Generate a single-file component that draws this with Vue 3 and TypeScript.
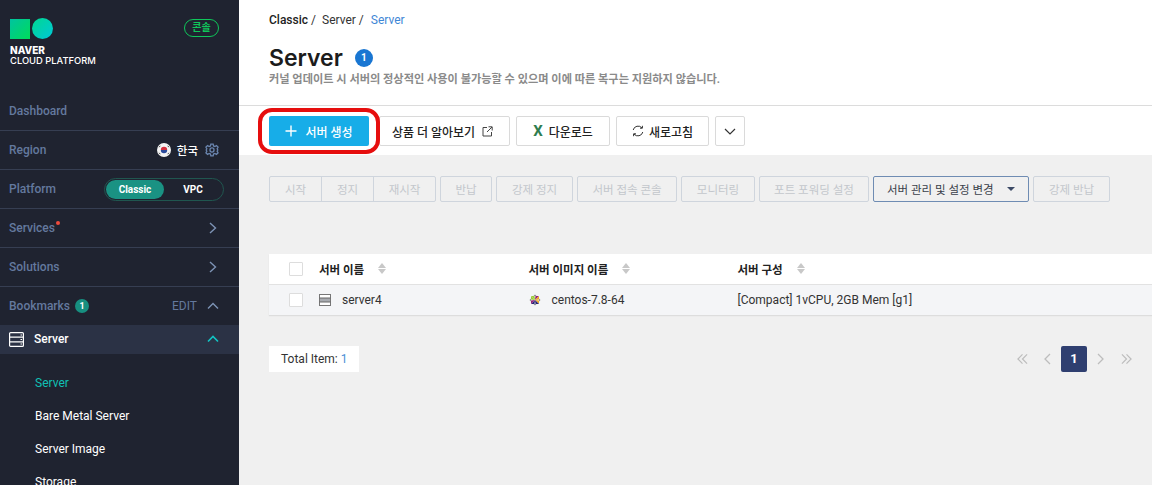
<script setup lang="ts">
const subMenu = ['Server', 'Bare Metal Server', 'Server Image', 'Storage']
const groupActions = ['시작', '정지', '재시작']
const beforeManage = [
  { label: '반납', width: 52 },
  { label: '강제 정지', width: 77 },
  { label: '서버 접속 콘솔', width: 100 },
  { label: '모니터링', width: 74 },
  { label: '포트 포워딩 설정', width: 110 }
]
</script>

<template>
  <div class="page">
    <aside class="sidebar">
      <div class="brand">
        <div class="logo-wrap">
          <div class="logo-marks">
            <span class="logo-square"></span>
            <span class="logo-circle"></span>
          </div>
          <div class="logo-name">NAVER</div>
          <div class="logo-sub">CLOUD PLATFORM</div>
        </div>
        <span class="console-tag">콘솔</span>
      </div>

      <div class="side-row"><span class="side-label">Dashboard</span></div>
      <div class="side-row">
        <span class="side-label">Region</span>
        <span class="region">
          <svg class="flag" width="14" height="14" viewBox="0 0 14 14">
            <circle cx="7" cy="7" r="7" fill="#f4f4f4" />
            <path d="M3.800 7a3.200 3.200 0 0 1 6.400 0z" fill="#d5303e" />
            <path d="M3.800 7a3.200 3.200 0 0 0 6.400 0z" fill="#2b4a9b" />
            <path d="M2.200 4.200l1-1.400M10.800 2.800l1 1.400M2.200 9.800l1 1.400M10.800 11.200l1-1.400" stroke="#444" stroke-width="1" />
          </svg>
          <span class="region-name">한국</span>
          <svg width="14" height="14" viewBox="0 0 24 24" fill="none" stroke="#6b86b0" stroke-width="2.200">
            <circle cx="12" cy="12" r="3.500" />
            <path d="M10 2h4l.6 3 2.400 1 2.600-1.600 2.800 2.800L20.800 10l1.200 2-1.200 2 1.600 2.800-2.800 2.800-2.600-1.600-2.400 1-.6 3h-4l-.6-3-2.400-1-2.600 1.600-2.800-2.800L3.200 14 2 12l1.200-2-1.600-2.800 2.800-2.800L7 6l2.400-1z" />
          </svg>
        </span>
      </div>
      <div class="side-row">
        <span class="side-label">Platform</span>
        <div class="platform-switch">
          <span class="switch-on">Classic</span>
          <span class="switch-off">VPC</span>
        </div>
      </div>
      <div class="side-row">
        <span class="side-label">Services<i class="red-dot"></i></span>
        <svg class="chev" width="8" height="12" viewBox="0 0 8 12" fill="none" stroke="#7d93b5" stroke-width="1.400">
          <path d="M1 1l5.500 5L1 11" />
        </svg>
      </div>
      <div class="side-row">
        <span class="side-label">Solutions</span>
        <svg class="chev" width="8" height="12" viewBox="0 0 8 12" fill="none" stroke="#7d93b5" stroke-width="1.400">
          <path d="M1 1l5.500 5L1 11" />
        </svg>
      </div>
      <div class="side-row no-line">
        <span class="side-label">Bookmarks<b class="mark-count">1</b></span>
        <span class="edit-wrap">
          <span class="edit">EDIT</span>
          <svg width="12" height="8" viewBox="0 0 12 8" fill="none" stroke="#7d93b5" stroke-width="1.400">
            <path d="M1 6.500L6 1.500l5 5" />
          </svg>
        </span>
      </div>
      <div class="server-row">
        <span class="server-title">
          <svg width="15" height="15" viewBox="0 0 15 15" fill="none" stroke="#fff" stroke-width="1.200">
            <rect x="0.600" y="0.600" width="13.800" height="13.800" rx="1" />
            <path d="M.6 5.200h13.800M.6 9.800h13.800M11.500 3h1.500M11.500 7.500h1.500M11.500 12h1.500" />
          </svg>
          Server
        </span>
        <svg width="12" height="8" viewBox="0 0 12 8" fill="none" stroke="#12c4c4" stroke-width="1.600">
          <path d="M1 6.500L6 1.500l5 5" />
        </svg>
      </div>
      <ul class="sub-menu">
        <li v-for="(item, i) in subMenu" :key="item" :class="{ current: i === 0 }">{{ item }}</li>
      </ul>
    </aside>

    <main class="content">
      <header class="top">
        <div class="crumbs">
          <b>Classic</b><span class="sep">/</span><span>Server</span><span class="sep">/</span><span class="crumb-now">Server</span>
        </div>
        <div class="title-line">
          <h1>Server</h1>
          <span class="title-count">1</span>
        </div>
        <p class="notice">커널 업데이트 시 서버의 정상적인 사용이 불가능할 수 있으며 이에 따른 복구는 지원하지 않습니다.</p>
        <div class="toolbar">
          <button class="btn primary">
            <svg width="12" height="12" viewBox="0 0 12 12" stroke="#fff" stroke-width="1.400"><path d="M6 .5v11M.5 6h11" /></svg>
            서버 생성
          </button>
          <button class="btn learn">
            상품 더 알아보기
            <svg width="11" height="11" viewBox="0 0 11 11" fill="none" stroke="#444" stroke-width="1">
              <path d="M5 1.500H1v8.500h8.500V6M6.500 .8h3.700v3.700M10 1L5 6" />
            </svg>
          </button>
          <button class="btn download"><span class="excel">X</span>다운로드</button>
          <button class="btn refresh">
            <svg width="12" height="12" viewBox="0 0 12 12" fill="none" stroke="#333" stroke-width="1">
              <path d="M1.200 5A5 5 0 0 1 10 3M10.800 7A5 5 0 0 1 2 9M10.400 .8V3.200H8M1.600 11.200V8.800H4" />
            </svg>
            새로고침
          </button>
          <button class="btn more">
            <svg width="12" height="7" viewBox="0 0 12 7" fill="none" stroke="#333" stroke-width="1.200"><path d="M1 1l5 5 5-5" /></svg>
          </button>
        </div>
        <div class="highlight"></div>
      </header>

      <section class="body">
        <div class="actions">
          <div class="act-group">
            <button v-for="a in groupActions" :key="a" class="act" disabled>{{ a }}</button>
          </div>
          <button
            v-for="a in beforeManage"
            :key="a.label"
            class="act"
            :style="{ width: a.width + 'px' }"
            disabled
          >{{ a.label }}</button>
          <button class="act manage">서버 관리 및 설정 변경<i class="caret"></i></button>
          <button class="act wide" disabled>강제 반납</button>
        </div>

        <div class="table">
          <div class="tr head">
            <div class="cell check"><span class="box"></span></div>
            <div class="cell">서버 이름<i class="sort"></i></div>
            <div class="cell">서버 이미지 이름<i class="sort"></i></div>
            <div class="cell">서버 구성<i class="sort"></i></div>
          </div>
          <div class="tr data">
            <div class="cell check"><span class="box"></span></div>
            <div class="cell name-cell">
              <svg width="12" height="12" viewBox="0 0 12 12">
                <rect x=".5" y=".5" width="11" height="11" fill="#fff" stroke="#777" />
                <rect x="1" y="4" width="10" height="4" fill="#a8abb0" />
                <path d="M.5 4h11M.5 8h11" stroke="#666" />
              </svg>
              server4
            </div>
            <div class="cell image-cell">
              <svg width="12" height="12" viewBox="0 0 12 12">
                <path d="M6 6L2 2h3.500z" fill="#9ccb3b" />
                <path d="M6 6L2 2v3.500z" fill="#9ccb3b" />
                <path d="M6 6l4-4H6.500z" fill="#932279" />
                <path d="M6 6l4-4v3.500z" fill="#efa724" />
                <path d="M6 6l4 4V6.500z" fill="#efa724" />
                <path d="M6 6l4 4H6.500z" fill="#262577" />
                <path d="M6 6l-4 4h3.500z" fill="#262577" />
                <path d="M6 6l-4 4V6.500z" fill="#932279" />
                <path d="M6 .5L7.500 2h-3zM6 11.500L4.500 10h3zM.5 6L2 4.500v3zM11.500 6L10 7.500v-3z" fill="#888" />
              </svg>
              centos-7.8-64
            </div>
            <div class="cell">[Compact] 1vCPU, 2GB Mem [g1]</div>
          </div>
        </div>

        <div class="foot">
          <div class="total">Total Item: <span>1</span></div>
          <nav class="pager">
            <svg width="11" height="12" viewBox="0 0 12 12" fill="none" stroke="#bdbdbd" stroke-width="1.300"><path d="M6 1L1 6l5 5M11 1L6 6l5 5" /></svg>
            <svg class="prev" width="7" height="12" viewBox="0 0 7 12" fill="none" stroke="#bdbdbd" stroke-width="1.300"><path d="M6 1L1 6l5 5" /></svg>
            <span class="page-now">1</span>
            <svg width="7" height="12" viewBox="0 0 7 12" fill="none" stroke="#bdbdbd" stroke-width="1.300"><path d="M1 1l5 5-5 5" /></svg>
            <svg class="last" width="11" height="12" viewBox="0 0 12 12" fill="none" stroke="#bdbdbd" stroke-width="1.300"><path d="M1 1l5 5-5 5M6 1l5 5-5 5" /></svg>
          </nav>
        </div>
      </section>
    </main>
  </div>
</template>

<style>
html, body {
  margin: 0;
  overflow: hidden;
}
</style>

<style scoped>
.page {
  display: flex;
  height: 485px;
  overflow: hidden;
  font-family: Roboto, "Noto Sans CJK KR", sans-serif;
  font-size: 12px;
  color: #222;
  background: #f0f0f0;
}
.sidebar {
  width: 239px;
  flex: none;
  background: #1f2330;
  overflow: hidden;
}
.brand {
  height: 92px;
  box-sizing: border-box;
  padding: 18px 20px 0 10px;
  display: flex;
  justify-content: space-between;
  align-items: flex-start;
}
.logo-marks {
  display: flex;
  align-items: center;
  gap: 2px;
  height: 21px;
}
.logo-square {
  width: 20px;
  height: 20px;
  background: linear-gradient(135deg, #00c3a0, #00dc5a);
}
.logo-circle {
  width: 21px;
  height: 21px;
  border-radius: 50%;
  background: linear-gradient(135deg, #00d890, #00c8d8);
}
.logo-name {
  margin-top: 6px;
  color: #fff;
  font: 800 10px/11px Inter, sans-serif;
}
.logo-sub {
  color: #fff;
  font: 500 9.400px/10px Inter, sans-serif;
  white-space: nowrap;
}
.console-tag {
  box-sizing: border-box;
  width: 35px;
  height: 18px;
  margin-top: 1px;
  border: 1px solid #0fc65a;
  border-radius: 9px;
  color: #0fc65a;
  font-size: 10px;
  font-weight: 700;
  line-height: 15px;
  text-align: center;
}
.side-row {
  height: 39px;
  box-sizing: border-box;
  padding: 0 20px 0 9px;
  display: flex;
  align-items: center;
  justify-content: space-between;
  border-bottom: 1px solid #363e52;
}
.side-row.no-line {
  height: 38px;
  border-bottom: 0;
}
.side-label {
  color: #64799e;
  font-size: 12px;
  font-weight: 500;
  position: relative;
  display: flex;
  align-items: center;
}
.region {
  display: flex;
  align-items: center;
  gap: 6px;
}
.region-name {
  color: #fff;
  font-size: 11.500px;
  font-weight: 500;
  margin-right: 1px;
}
.platform-switch {
  width: 120px;
  height: 23px;
  box-sizing: border-box;
  margin-right: -5px;
  padding: 1px;
  border: 1px solid #20564f;
  border-radius: 12px;
  display: flex;
  align-items: center;
  font-size: 10px;
  font-weight: 700;
  color: #fff;
}
.switch-on {
  width: 58px;
  height: 19px;
  line-height: 19px;
  text-align: center;
  border-radius: 10px;
  background: #1a9283;
}
.switch-off {
  flex: 1;
  text-align: center;
}
.red-dot {
  position: absolute;
  top: 0;
  right: -5px;
  width: 4px;
  height: 4px;
  border-radius: 50%;
  background: #f04a3c;
}
.chev {
  margin-right: 2px;
}
.mark-count {
  width: 14px;
  height: 14px;
  margin-left: 5px;
  border-radius: 50%;
  background: #178f80;
  color: #fff;
  font-size: 9px;
  line-height: 14px;
  text-align: center;
}
.edit-wrap {
  display: flex;
  align-items: center;
  gap: 10px;
}
.edit {
  color: #64799e;
}
.server-row {
  height: 29px;
  box-sizing: border-box;
  padding: 0 20px 1px 9px;
  background: #2b3245;
  display: flex;
  align-items: center;
  justify-content: space-between;
}
.server-title {
  display: flex;
  align-items: center;
  gap: 10px;
  color: #fff;
  font-weight: 500;
}
.sub-menu {
  list-style: none;
  margin: 0;
  padding: 13px 0 0 35px;
  color: #fff;
}
.sub-menu li {
  height: 33px;
  line-height: 33px;
}
.sub-menu .current {
  color: #10c0b4;
}
.content {
  flex: 1;
  min-width: 0;
}
.top {
  position: relative;
  height: 155px;
  box-sizing: border-box;
  background: #fff;
  padding-top: 13px;
}
.crumbs {
  padding-left: 30px;
  display: flex;
  font-size: 12px;
  line-height: 14px;
  color: #333;
}
.crumbs b {
  font-weight: 500;
  color: #222;
}
.sep {
  margin: 0 6px 0 3px;
}
.crumb-now {
  color: #3f87d6;
  margin-left: 1px;
}
.title-line {
  padding-left: 30px;
  margin-top: 13px;
  display: flex;
  align-items: center;
  height: 36px;
}
.title-line h1 {
  margin: 0;
  font: 600 23px/36px Inter, sans-serif;
  color: #1c1c1c;
}
.title-count {
  width: 18px;
  height: 18px;
  margin-left: 12px;
  border-radius: 50%;
  background: #1976d2;
  color: #fff;
  font-size: 10px;
  font-weight: 700;
  line-height: 18px;
  text-align: center;
}
.notice {
  margin: -3px 0 0;
  padding: 0 0 18px 30px;
  border-bottom: 1px solid #dcdcdc;
  font-size: 11.200px;
  line-height: 14px;
  font-weight: 700;
  color: #8a8a8a;
}
.toolbar {
  margin-top: 10px;
  padding-left: 30px;
  display: flex;
  gap: 6px;
}
.btn {
  height: 30px;
  box-sizing: border-box;
  border: 1px solid #dadada;
  border-radius: 2px;
  background: #fff;
  font-family: inherit;
  font-size: 12px;
  font-weight: 500;
  color: #222;
  display: flex;
  align-items: center;
  justify-content: center;
  gap: 5px;
  padding: 0;
}
.primary {
  width: 100px;
  margin-right: 4px;
  border: 0;
  background: #17ade8;
  color: #fff;
  gap: 8px;
}
.learn {
  width: 131px;
  padding-right: 4px;
  gap: 7px;
}
.download {
  width: 94px;
}
.excel {
  color: #2f7d4f;
  font-size: 15px;
  font-weight: 700;
  margin-right: 1px;
}
.refresh {
  width: 93px;
}
.more {
  width: 30px;
}
.highlight {
  position: absolute;
  left: 19px;
  top: 108px;
  width: 122px;
  height: 46px;
  box-sizing: border-box;
  border: 4px solid #e60e0e;
  border-radius: 14px;
}
.body {
  padding: 21px 0 0 30px;
}
.actions {
  display: flex;
  gap: 4px;
}
.act-group {
  display: flex;
}
.act-group .act {
  width: 53px;
  border-radius: 0;
  margin-left: -1px;
}
.act-group .act:first-child {
  margin-left: 0;
  border-radius: 2px 0 0 2px;
}
.act-group .act:last-child {
  width: 63px;
  border-radius: 0 2px 2px 0;
}
.act {
  height: 26px;
  box-sizing: border-box;
  padding: 0;
  border: 1px solid #cfd5dd;
  border-radius: 2px;
  background: transparent;
  font-family: inherit;
  font-size: 11.500px;
  color: #c3c7cc;
  white-space: nowrap;
}
.wide {
  width: 77px;
}
.manage {
  width: 156px;
  padding-left: 13px;
  display: flex;
  align-items: center;
  border-color: #6f8cb3;
  color: #3a3f4a;
}
.caret {
  margin-left: 13px;
  border-style: solid;
  border-width: 4px 4px 0;
  border-color: #3c4a66 transparent transparent;
}
.table {
  margin-top: 52px;
  box-shadow: 0 1px 1px #ddd;
}
.tr {
  display: grid;
  grid-template-columns: 50px 209.500px 209px 1fr;
  align-items: center;
  box-sizing: border-box;
}
.head {
  height: 31px;
  padding-bottom: 1px;
  background: #fff;
  border-bottom: 1px solid #e2e2e2;
  font-weight: 700;
  color: #222;
  font-size: 11.500px;
}
.data {
  height: 30px;
  background: #f4f5f7;
  color: #333;
}
.cell {
  display: flex;
  align-items: center;
}
.check {
  padding-left: 20px;
}
.box {
  width: 14px;
  height: 14px;
  box-sizing: border-box;
  background: #fff;
  border: 1px solid #ddd;
  border-radius: 1px;
}
.sort {
  position: relative;
  width: 8px;
  height: 11px;
  margin-left: 14px;
}
.sort::before,
.sort::after {
  content: "";
  position: absolute;
  left: 0;
  border-style: solid;
  border-color: transparent;
}
.sort::before {
  top: 0;
  border-width: 0 4px 5px;
  border-bottom-color: #c8c8c8;
}
.sort::after {
  bottom: 0;
  border-width: 5px 4px 0;
  border-top-color: #c8c8c8;
}
.name-cell {
  gap: 11px;
}
.image-cell {
  gap: 11px;
}
.foot {
  margin-top: 31px;
  display: flex;
  justify-content: space-between;
  align-items: center;
  padding-right: 20px;
}
.total {
  width: 90px;
  height: 26px;
  box-sizing: border-box;
  padding-left: 12px;
  background: #fff;
  line-height: 26px;
  color: #333;
}
.total span {
  color: #4c8fd6;
}
.pager {
  display: flex;
  align-items: center;
  gap: 10px;
}
.prev {
  margin-left: 6px;
}
.last {
  margin-left: 7px;
}
.page-now {
  width: 26px;
  height: 26px;
  border-radius: 2px;
  background: #2f3f70;
  color: #fff;
  font-weight: 700;
  font-size: 13px;
  line-height: 26px;
  text-align: center;
}
</style>
